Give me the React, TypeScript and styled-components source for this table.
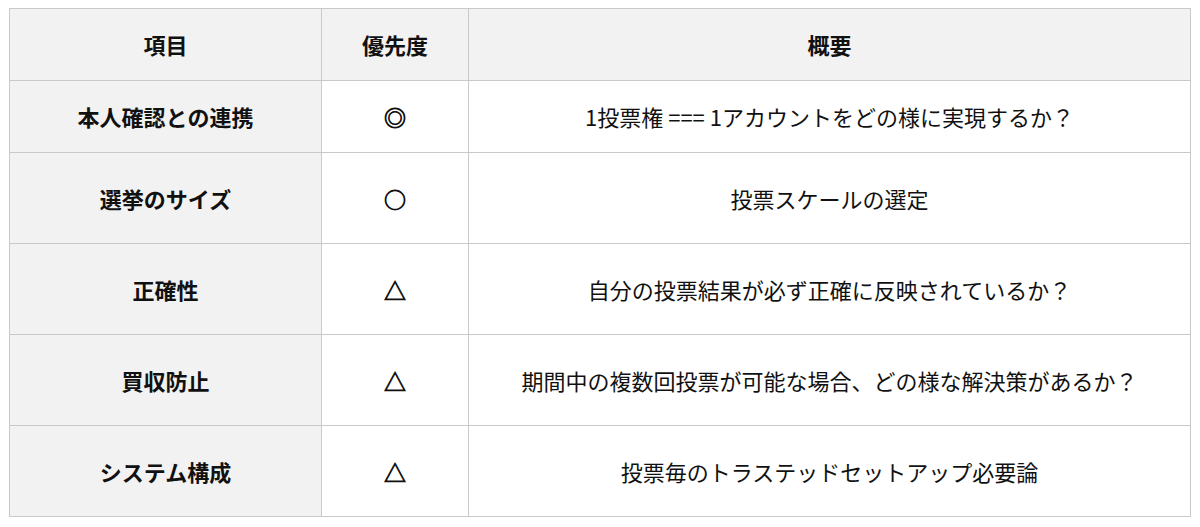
import styled, { createGlobalStyle } from 'styled-components'

type Row = {
  item: string
  priority: string
  summary: string
}

const rows: Row[] = [
  { item: '本人確認との連携', priority: '◎', summary: '1投票権 === 1アカウントをどの様に実現するか？' },
  { item: '選挙のサイズ', priority: '○', summary: '投票スケールの選定' },
  { item: '正確性', priority: '△', summary: '自分の投票結果が必ず正確に反映されているか？' },
  { item: '買収防止', priority: '△', summary: '期間中の複数回投票が可能な場合、どの様な解決策があるか？' },
  { item: 'システム構成', priority: '△', summary: '投票毎のトラステッドセットアップ必要論' },
]

const GlobalStyle = createGlobalStyle`
  html, body {
    margin: 0;
    padding: 0;
    background: #ffffff;
  }
  body {
    font-family: 'Noto Sans CJK JP', 'Noto Sans', sans-serif;
    color: #111111;
  }
`

const App = () => {
  return (
    <Page>
      <GlobalStyle />
      <Table>
        <colgroup>
          <col style={{ width: 312 }} />
          <col style={{ width: 147 }} />
          <col />
        </colgroup>
        <thead>
          <HeadRow>
            <HeadCell>項目</HeadCell>
            <HeadCell>優先度</HeadCell>
            <HeadCell>概要</HeadCell>
          </HeadRow>
        </thead>
        <tbody>
          {rows.map((row, i) => (
            <BodyRow key={row.item} $short={i === 0}>
              <ItemCell>{row.item}</ItemCell>
              <SymbolCell>{row.priority}</SymbolCell>
              <Cell>{row.summary}</Cell>
            </BodyRow>
          ))}
        </tbody>
      </Table>
    </Page>
  )
}

const Page = styled.div`
  padding: 8px 9px 0 9px;
`

const Table = styled.table`
  width: 1182px;
  border-collapse: collapse;
  table-layout: fixed;
  font-size: 22px;
  line-height: 1.2;
`

const HeadRow = styled.tr`
  height: 72px;
`

const BodyRow = styled.tr<{ $short?: boolean }>`
  height: ${(p) => (p.$short ? '72px' : '91px')};
`

const Cell = styled.td`
  border: 1px solid #c9c9c9;
  text-align: center;
  vertical-align: middle;
  padding: 0 6px;
  font-weight: 400;
  background: #ffffff;
`

const HeadCell = styled.th`
  border: 1px solid #c9c9c9;
  text-align: center;
  vertical-align: middle;
  padding: 0 6px;
  font-weight: 700;
  background: #f2f2f2;
`

const ItemCell = styled(Cell)`
  font-weight: 700;
  background: #f2f2f2;
`

const SymbolCell = styled(Cell)`
  font-size: 22px;
  -webkit-text-stroke: 0.8px #111111;
`

export default App
